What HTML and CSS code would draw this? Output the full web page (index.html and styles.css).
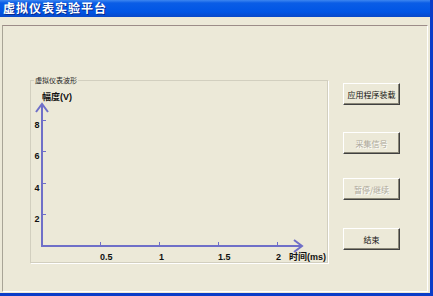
FILE: index.html
```html
<!DOCTYPE html>
<html>
<head lang="zh">
    <meta charset="UTF-8">
    <title>虚拟仪表实验平台</title>
    <link rel="stylesheet" href="styles.css">
</head>
<body>
<div class="window">
    <div class="titlebar">虚拟仪表实验平台</div>
    <div class="frame">
        <div class="panel">
            <div class="group">
                <span class="group_label">虚拟仪表波形</span>
                <svg class="chart" width="296" height="181" viewBox="0 0 296 181">
                    <!-- axes -->
                    <g stroke="#6f6fc8" stroke-width="2" fill="none">
                        <line x1="11" y1="23" x2="11" y2="165"/>
                        <line x1="10" y1="165" x2="270" y2="165"/>
                        <polyline points="5,31 11,23 17,31"/>
                        <polyline points="263,159 271,165 263,171"/>
                    </g>
                    <g stroke="#6f6fc8" stroke-width="1">
                        <line x1="12" y1="39.5" x2="15" y2="39.5"/>
                        <line x1="12" y1="70.5" x2="15" y2="70.5"/>
                        <line x1="12" y1="102.5" x2="15" y2="102.5"/>
                        <line x1="12" y1="133.5" x2="15" y2="133.5"/>
                        <line x1="69.5" y1="164" x2="69.5" y2="161"/>
                        <line x1="128.5" y1="164" x2="128.5" y2="161"/>
                        <line x1="187.5" y1="164" x2="187.5" y2="161"/>
                        <line x1="246.5" y1="164" x2="246.5" y2="161"/>
                    </g>
                    <g class="tick_text" text-anchor="middle">
                        <text x="6" y="47">8</text>
                        <text x="6" y="78">6</text>
                        <text x="6" y="110">4</text>
                        <text x="6" y="141">2</text>
                    </g>
                    <g class="tick_text">
                        <text x="69" y="179">0.5</text>
                        <text x="128" y="179">1</text>
                        <text x="187" y="179">1.5</text>
                        <text x="245" y="179">2</text>
                    </g>
                    <text class="axis_name" x="11" y="19">幅度(V)</text>
                    <text class="axis_name" x="258" y="179">时间(ms)</text>
                </svg>
            </div>
            <div class="buttons">
                <button class="btn">应用程序装载</button>
                <button class="btn" disabled>采集信号</button>
                <button class="btn" disabled>暂停/继续</button>
                <button class="btn">结束</button>
            </div>
        </div>
    </div>
</div>
</body>
</html>
```

FILE: styles.css
```css
*{margin: 0; padding: 0; box-sizing: border-box}

body{
    background: #ece9d8;
    font-family: "Liberation Sans", "Noto Sans CJK SC", sans-serif;
}
.window{
    width: 433px;
    height: 296px;
    display: flex;
    flex-direction: column;
    overflow: hidden;
}
.titlebar{
    height: 17px;
    line-height: 16px;
    padding-left: 3px;
    color: #ffffff;
    font-family: "Noto Sans CJK SC", sans-serif;
    font-size: 12px;
    font-weight: bold;
    letter-spacing: 1px;
    text-shadow: 1px 1px 0 #0a2a8a;
    background: linear-gradient(#3d86f0 0, #0a5de6 3px, #0055e5 12px, #0848c8 17px);
    border-right: 3px solid #0a3dc8;
}
.frame{
    flex: 1;
    display: flex;
    border-right: 3px solid #0a3dc8;
    border-bottom: 3px solid #0a3dc8;
    background: #ece9d8;
}
.panel{
    flex: 1;
    display: flex;
    align-items: flex-start;
    margin: 8px 2px 1px 2px;
    padding: 54px 0 0 27px;
    border-top: 1px solid #9c8c88;
    border-left: 1px solid #a8a496;
    border-right: 1px solid #ffffff;
    border-bottom: 1px solid #ffffff;
}
.group{
    position: relative;
    width: 298px;
    height: 183px;
    border: 1px solid #d2cfbf;
    box-shadow: 1px 1px 0 #ffffff;
}
.group_label{
    position: absolute;
    top: -6px;
    left: 3px;
    padding: 0 1px;
    font-family: "Noto Sans CJK SC", sans-serif;
    font-size: 7px;
    line-height: 10px;
    color: #222222;
    background: #ece9d8;
}
.chart{
    display: block;
}
.tick_text{
    font-size: 9px;
    font-weight: bold;
    fill: #111111;
}
.axis_name{
    font-family: "Liberation Sans", "Noto Sans CJK SC", sans-serif;
    font-size: 9px;
    font-weight: bold;
    fill: #111111;
}
.buttons{
    display: flex;
    flex-direction: column;
    margin: 3px 0 0 15px;
}
.btn{
    width: 57px;
    height: 22px;
    font-family: "Noto Sans CJK SC", sans-serif;
    font-size: 8px;
    color: #111111;
    background: #ece9d8;
    border: 1px solid;
    border-color: #ffffff #404040 #404040 #ffffff;
    box-shadow: inset -1px -1px 0 #8a8778;
}
.btn:nth-child(2){margin-top: 27px}
.btn:nth-child(3){margin-top: 24px}
.btn:nth-child(4){margin-top: 28px}
.btn:disabled{
    color: #aca899;
    text-shadow: 1px 1px 0 #ffffff;
}
```
